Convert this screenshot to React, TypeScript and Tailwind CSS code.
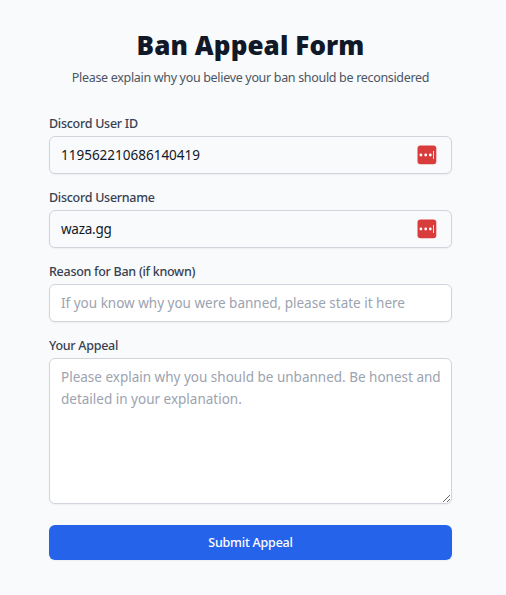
import type { ReactNode } from "react";

const inputClass =
  "block h-[38px] w-full rounded-md border border-[#d1d5db] px-[11px] pt-0 pb-px text-[13.5px] text-[#111827] shadow-xs outline-none placeholder:text-[#9ca3af]";

function PasswordBadge() {
  return (
    <svg className="absolute top-[9px] right-[15px]" width="20" height="20" viewBox="0 0 20 20">
      <rect x="0.5" y="0.5" width="18.8" height="18.8" rx="3" fill="#d93d3b" />
      <circle cx="3.9" cy="10" r="1.4" fill="#fff" />
      <circle cx="8.7" cy="10" r="1.4" fill="#fff" />
      <circle cx="13.3" cy="10" r="1.4" fill="#fff" />
      <rect x="16" y="6" width="1" height="8" fill="#fff" fillOpacity="0.85" />
    </svg>
  );
}

function Field({ id, label, children }: { id: string; label: string; children: ReactNode }) {
  return (
    <div>
      <label htmlFor={id} className="mb-[2px] block h-[21px] pt-px text-[12.5px] leading-5 font-medium tracking-[-0.28px] whitespace-nowrap text-[#374151]">
        {label}
      </label>
      <div className="relative">{children}</div>
    </div>
  );
}

export default function App() {
  return (
    <main className="h-[595px] w-[506px] bg-[#f9fafc] px-[49px] pt-[27px] font-['Noto_Sans','Open_Sans',sans-serif]">
      <header className="-mr-[18px] -ml-[23px] text-center">
        <h1 className="text-[26px] leading-9 font-black tracking-[0.1px] whitespace-nowrap text-[#111827]">Ban Appeal Form</h1>
        <p className="mt-[5px] text-[12.5px] leading-5 tracking-[-0.32px] whitespace-nowrap text-[#4b5563]">
          Please explain why you believe your ban should be reconsidered
        </p>
      </header>
      <form className="mt-[25px] w-[403px]" onSubmit={(event) => event.preventDefault()}>
        <div className="flex flex-col gap-[13px]">
          <Field id="user-id" label="Discord User ID">
            <input id="user-id" className={`${inputClass} bg-[#f9fafc]`} defaultValue="119562210686140419" />
            <PasswordBadge />
          </Field>
          <Field id="username" label="Discord Username">
            <input id="username" className={`${inputClass} bg-[#f9fafc] tracking-[-0.25px]`} defaultValue="waza.gg" />
            <PasswordBadge />
          </Field>
          <Field id="reason" label="Reason for Ban (if known)">
            <input id="reason" className={`${inputClass} bg-white`} placeholder="If you know why you were banned, please state it here" />
          </Field>
          <Field id="appeal" label="Your Appeal">
            <textarea
              id="appeal"
              className="block h-[146px] w-full resize-y rounded-md border border-[#d1d5db] bg-white py-[7px] pr-1 pl-[11px] text-[13.5px] leading-[22px] text-[#111827] shadow-xs outline-none placeholder:text-[#9ca3af]"
              placeholder="Please explain why you should be unbanned. Be honest and detailed in your explanation."
            />
          </Field>
        </div>
        <button className="mt-[21px] flex h-[35px] w-full items-center justify-center rounded-md bg-[#2563eb] pt-[2px] text-[12.5px] font-medium tracking-[-0.2px] text-white shadow-xs">
          Submit Appeal
        </button>
      </form>
    </main>
  );
}
